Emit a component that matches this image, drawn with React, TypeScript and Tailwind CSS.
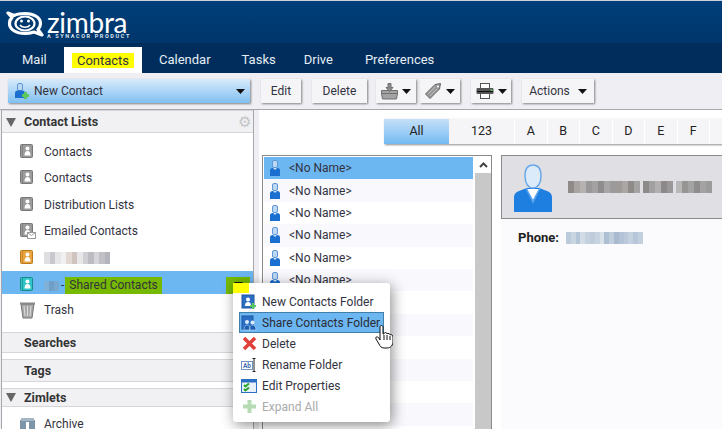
const folders = [
  { label: "Contacts", color: "gray" },
  { label: "Contacts", color: "gray" },
  { label: "Distribution Lists", color: "gray" },
  { label: "Emailed Contacts", color: "gray", mail: true },
];

const letters = ["A", "B", "C", "D", "E", "F"];

function Caret({ className = "" }: { className?: string }) {
  return (
    <svg width="9" height="5" viewBox="0 0 9 5" className={className}>
      <path d="M0 0h9L4.5 5z" fill="#111" />
    </svg>
  );
}

function Mosaic({ cells, size = 5, h = 12 }: { cells: string[]; size?: number; h?: number }) {
  return (
    <div className="flex shrink-0">
      {cells.map((c, i) => (
        <div key={i} style={{ background: c, width: size, height: h }} />
      ))}
    </div>
  );
}

function BookIcon({ fill, edge, mail }: { fill: string; edge: string; mail?: boolean }) {
  return (
    <svg width="17" height="18" viewBox="0 0 17 18" className="shrink-0">
      <rect x="1.500" y="1.500" width="12" height="13" rx="1" fill={fill} stroke={edge} />
      <rect x="3" y="2" width="1" height="12" fill={edge} opacity="0.6" />
      <circle cx="8.500" cy="5.500" r="2" fill="#fff" />
      <path d="M5.500 12.500c0-3 1-4.500 3-4.500s3 1.500 3 4.500z" fill="#fff" />
      {mail && (
        <g>
          <rect x="8.500" y="10.500" width="8" height="6" fill="#fff" stroke="#9a9a9a" />
          <path d="M8.500 10.500l4 3 4-3" fill="none" stroke="#9a9a9a" />
        </g>
      )}
    </svg>
  );
}

function PersonIcon() {
  return (
    <svg width="12" height="16" viewBox="0 0 12 16" className="shrink-0">
      <rect x="3.500" y="0.500" width="5" height="7" rx="1.500" fill="#bcd8f4" stroke="#5e97d6" />
      <path d="M1 16V10.500c0-1.500 1-2.500 2.500-2.500h5c1.500 0 2.500 1 2.500 2.500V16z" fill="#1a6fd0" />
      <path d="M4 8l2 2 2-2z" fill="#cfe3f7" />
    </svg>
  );
}

function LogoMark() {
  return (
    <svg width="38" height="26" viewBox="0 0 38 26" className="shrink-0">
      <path d="M2 2l6 2.500C11 3 15 2.500 19 2.500c9 0 15.500 4 15.500 10 0 2.500-1 4.500-2.500 6l4 5.500-8-3c-3 1-5.500 1.500-9 1.500-9 0-15.500-4-15.500-10 0-2.500 1-4.500 2.500-6z" fill="none" stroke="#fff" strokeWidth="3.200" strokeLinejoin="round" />
      <ellipse cx="19" cy="12.500" rx="9.500" ry="7" fill="#00386e" stroke="#fff" strokeWidth="2.200" />
      <circle cx="15.500" cy="10" r="1.500" fill="#fff" />
      <circle cx="22.500" cy="10" r="1.500" fill="#fff" />
      <path d="M14 14c2 3 8 3 10 0" fill="none" stroke="#fff" strokeWidth="1.600" />
    </svg>
  );
}

function ToolButton({ children, className = "" }: { children: React.ReactNode; className?: string }) {
  return (
    <div className={`flex h-6 items-center justify-center bg-[#f5f5f8] text-[12px] text-[#33333f] shadow-[1px_1px_2px_rgba(0,0,0,0.45)] ${className}`}>
      {children}
    </div>
  );
}

function SectionHeader({ label, open, gear, className = "" }: { label: string; open?: boolean; gear?: boolean; className?: string }) {
  return (
    <div className={`flex shrink-0 items-center border-y border-[#d6d6da] bg-[#f1f1f4] text-[12.500px] font-bold text-[#333] ${className}`}>
      <div className="flex w-[22px] pl-[4px]">
        {open && (
          <svg width="10" height="9" viewBox="0 0 10 9">
            <path d="M0 0h10L5 9z" fill="#666" />
          </svg>
        )}
      </div>
      <span>{label}</span>
      {gear && <span className="ml-auto mr-[2px] text-[15px] font-normal leading-none text-[#c4c4c4]">⚙</span>}
    </div>
  );
}

function MenuItem({ icon, label, active, disabled }: { icon: React.ReactNode; label: string; active?: boolean; disabled?: boolean }) {
  return (
    <div
      className={`flex h-[21px] items-center gap-[5px] whitespace-nowrap border pl-[1px] text-[12px] ${
        active ? "border-[#3f7fa8] bg-[#6cb6f2] text-[#2b2b33]" : "border-transparent text-[#33333f]"
      } ${disabled ? "text-[#aaaaaa]" : ""}`}
    >
      <div className="flex w-4 justify-center">{icon}</div>
      <span>{label}</span>
    </div>
  );
}

function FolderRow({ label, color, mail }: { label: string; color: string; mail?: boolean }) {
  return (
    <div className="flex h-[26.300px] items-center gap-[8px] pl-[17px] text-[12px] text-[#33333f]">
      <BookIcon fill={color === "gray" ? "#9b9b9b" : "#e8a33c"} edge={color === "gray" ? "#777" : "#b97a20"} mail={mail} />
      <span>{label}</span>
    </div>
  );
}

export default function App() {
  return (
    <div className="relative flex h-[429px] w-[722px] flex-col overflow-hidden bg-[#eeeef3] font-['Roboto',sans-serif]">
      {/* banner */}
      <div className="h-[43px] shrink-0 border-t border-[#c9d2dd] bg-gradient-to-b from-[#003f7a] to-[#00366b]">
        <div className="flex items-start pl-[6px] pt-[10px]">
          <LogoMark />
          <div className="ml-[3px] flex flex-col items-start">
            <span className="font-['Lato',sans-serif] text-[28px] leading-[22px] tracking-[-0.3px] text-white">zimbra</span>
            <span className="whitespace-nowrap text-[5.500px] font-bold leading-[6px] tracking-[1.600px] text-[#dbe4ee]">A SYNACOR PRODUCT</span>
          </div>
        </div>
      </div>

      {/* tabs */}
      <div className="flex h-[30px] shrink-0 items-end bg-[#002d5c] text-[13px] text-[#e6edf4]">
        <div className="flex h-[26px] w-[64px] items-center pl-[22px]">Mail</div>
        <div className="flex h-[26px] w-[78px] items-center justify-center bg-white text-[#33333f]">
          <span className="bg-[#ffff00] px-[5px] leading-[15px]">Contacts</span>
        </div>
        <div className="flex h-[26px] items-center pl-[17px]">
          <span>Calendar</span>
          <span className="ml-[31px]">Tasks</span>
          <span className="ml-[28px]">Drive</span>
          <span className="ml-[32px]">Preferences</span>
        </div>
      </div>

      {/* toolbar */}
      <div className="flex h-[37px] shrink-0 items-center border-b border-[#a8a8ac] pl-2">
        <div className="flex h-6 w-[242px] items-center bg-gradient-to-b from-[#d8eafa] to-[#7fc0f2] pl-[6px] pr-[5px] text-[12px] text-[#33333f] shadow-[1px_1px_2px_rgba(0,0,0,0.45)]">
          <svg width="15" height="17" viewBox="0 0 15 17" className="mr-[5px] shrink-0">
            <rect x="3.500" y="0.500" width="5" height="7" rx="1.500" fill="#bcd8f4" stroke="#5e97d6" />
            <path d="M1 15v-5c0-1.500 1-2.500 2.500-2.500h5c1.500 0 2.500 1 2.500 2.500v5z" fill="#1a6fd0" />
            <path d="M10 9v2H8v3h2v2h3v-2h2v-3h-2V9z" fill="#5cc95c" />
          </svg>
          <span>New Contact</span>
          <Caret className="ml-auto" />
        </div>
        <ToolButton className="ml-[11px] w-10">Edit</ToolButton>
        <ToolButton className="ml-[11px] w-[55px]">Delete</ToolButton>
        <ToolButton className="ml-[9px] w-10 gap-1">
          <svg width="17" height="17" viewBox="0 0 17 17">
            <path d="M0.500 7.500h16v3l-1 5.500h-14l-1-5.500z" fill="#a3a3a3" stroke="#6f6f6f" />
            <path d="M0.500 10.500h16" stroke="#6f6f6f" />
            <path d="M7 0.500h3v4h2l-3.500 4-3.500-4h2z" fill="#8c8c8c" stroke="#6f6f6f" />
          </svg>
          <Caret />
        </ToolButton>
        <ToolButton className="ml-1 w-10 gap-1">
          <svg width="17" height="17" viewBox="0 0 17 17">
            <path d="M0.500 11l9.500-9.500 5.500-1-1 5.500-9.500 9.500z" fill="#999" stroke="#666" />
            <path d="M3 11l7-7M5 13l7-7" stroke="#bbb" />
            <circle cx="13" cy="3.500" r="1.100" fill="#fff" />
          </svg>
          <Caret />
        </ToolButton>
        <ToolButton className="ml-[11px] w-10 gap-1">
          <svg width="18" height="16" viewBox="0 0 18 16">
            <rect x="4.500" y="0.500" width="9" height="5" fill="#fff" stroke="#555" />
            <rect x="0.500" y="5" width="17" height="6" rx="1" fill="#555" />
            <rect x="1" y="8" width="16" height="1" fill="#111" />
            <rect x="4.500" y="10.500" width="9" height="5" fill="#fff" stroke="#555" />
            <rect x="14.500" y="6.500" width="2" height="1.500" fill="#5cc95c" />
          </svg>
          <Caret />
        </ToolButton>
        <ToolButton className="ml-[11px] w-[72px] gap-2">
          <span>Actions</span>
          <Caret />
        </ToolButton>
      </div>

      <div className="flex min-h-0 flex-1">
        {/* sidebar */}
        <div className="ml-[1px] flex w-[253px] shrink-0 flex-col border-x border-[#a8a8ac] bg-white">
          <SectionHeader label="Contact Lists" open gear className="h-[23px] pt-[1px]" />
          <div className="pt-[6px]">
            {folders.map((f, i) => (
              <FolderRow key={i} label={f.label} color={f.color} mail={f.mail} />
            ))}
            <div className="flex h-[27.300px] items-center gap-[8px] pl-[17px]">
              <BookIcon fill="#e8a33c" edge="#b97a20" />
              <Mosaic size={5.500} h={12} cells={["#dfdfe2", "#c9c9cd", "#e6e6e8", "#f0f0f0", "#e2d8d4", "#cfc4c0", "#e8e8e8", "#d0d0d4", "#bcbcc2", "#d6d6da", "#c0c0c6", "#b4b4bc"]} />
            </div>
            <div className="flex h-[23px] items-end bg-[#6cb6f2] pl-[17px] pr-[3px] text-[12px] text-[#33333f]">
              <BookIcon fill="#2fc4c8" edge="#18898c" />
              <div className="mb-[3px] ml-[8px]">
                <Mosaic size={5} h={10} cells={["#7fb0d8", "#6f9fc8", "#7aa8cf"]} />
              </div>
              <span className="ml-[2px] leading-[17px]">-</span>
              <span className="ml-[1px] bg-[#76b900] px-1 leading-[17px]">Shared Contacts</span>
              <div className="ml-auto flex h-[17px] w-6 items-start justify-center bg-[#76b900] pt-[5px]">
                <Caret />
              </div>
            </div>
            <div className="flex h-[32px] items-center gap-[8px] pl-[17px] text-[12px] text-[#33333f]">
              <svg width="17" height="18" viewBox="0 0 17 18" className="shrink-0">
                <path d="M2 3h13l-2 14H4z" fill="#a8a8a8" stroke="#777" />
                <rect x="1" y="1.500" width="15" height="2" fill="#888" />
                <path d="M5 5l1 10M8.500 5v10M12 5l-1 10" stroke="#dcdcdc" />
              </svg>
              <span>Trash</span>
            </div>
          </div>
          <SectionHeader label="Searches" className="mt-[6px] h-[21px]" />
          <SectionHeader label="Tags" className="mt-[6px] h-[23px]" />
          <SectionHeader label="Zimlets" open className="mt-[6px] h-[19px]" />
          <div className="flex items-center gap-[8px] pl-[17px] pt-[8px] text-[12px] text-[#33333f]">
            <svg width="17" height="15" viewBox="0 0 17 15" className="shrink-0">
              <path d="M1 3h15v12H1z" fill="#7d95a8" />
              <path d="M2 1h13v3H2z" fill="#a4b6c4" />
              <rect x="7" y="5" width="3" height="8" fill="#fff" />
            </svg>
            <span>Archive</span>
          </div>
        </div>

        {/* contacts area */}
        <div className="ml-[5px] flex min-w-0 flex-1 flex-col bg-white">
          <div className="ml-[125px] mt-[9px] flex h-[25px] w-[400px] shrink-0 items-center bg-[#f5f5f8] text-center text-[12.500px] text-[#222] shadow-[1px_1px_2px_rgba(0,0,0,0.45)]">
            <div className="flex h-full w-[65px] items-center justify-center bg-gradient-to-b from-[#c5e0f7] to-[#74baf2]">All</div>
            <div className="flex h-full w-[66px] items-center justify-center border-r border-white">123</div>
            {letters.map((l) => (
              <div key={l} className="flex h-full w-[32.500px] items-center justify-center border-r border-white">
                {l}
              </div>
            ))}
          </div>

          <div className="mt-[11px] flex min-h-0 flex-1 pl-[3px]">
            {/* list */}
            <div className="flex w-[230px] shrink-0 border-x border-t border-[#8a8a8a] pl-[1px] pt-[1px]">
              <div className="w-[209px] shrink-0">
                {[0, 1, 2, 3, 4, 5, 6, 7, 8, 9, 10, 11].map((i) => (
                  <div
                    key={i}
                    className={`flex h-[22.400px] items-center gap-[8px] pl-[5px] text-[12px] text-[#33333f] ${
                      i === 0 ? "bg-[#6cb6f2]" : i % 2 === 1 ? "bg-[#f9f9fd]" : "bg-white"
                    }`}
                  >
                    {/* rows past the sixth sit entirely under the menu */}
                    {i < 6 && <PersonIcon />}
                    {i < 6 && <span>{"<No Name>"}</span>}
                  </div>
                ))}
              </div>
              <div className="ml-[2px] flex w-4 shrink-0 flex-col bg-[#c8c8c8]">
                <div className="flex h-4 shrink-0 items-center justify-center bg-white">
                  <svg width="9" height="6" viewBox="0 0 9 6">
                    <path d="M1 5l3.500-3.500L8 5" fill="none" stroke="#444" strokeWidth="2" />
                  </svg>
                </div>
              </div>
            </div>

            {/* detail */}
            <div className="ml-[9px] flex min-w-0 flex-1 flex-col bg-[#fbfbfe]">
              <div className="flex h-[64px] shrink-0 items-center border-y border-l border-[#8a8a8a] bg-[#e0e0e4] pl-[11px]">
                <svg width="40" height="50" viewBox="0 0 40 50" className="mt-[4px] shrink-0">
                  <path d="M1 48V33c0-3 2-5 5-6l8-3h12l8 3c3 1 5 3 5 6v15z" fill="#1f7fe0" />
                  <path d="M14 25l6 11 6-11z" fill="#fff" />
                  <path d="M13 24l7 14 7-14" fill="none" stroke="#5aa5ee" strokeWidth="1.500" />
                  <path d="M12 12c0-7 3-11 8-11s8 4 8 11-3 12-8 12-8-5-8-12z" fill="#dcebfa" stroke="#6aa8ea" strokeWidth="1.500" />
                </svg>
                <div className="ml-[15px] flex gap-[3px]">
                  <Mosaic size={6} h={12} cells={["#8f8a88", "#a8a4a2", "#b5b2b2", "#9a9798", "#a4a1a2", "#8f8c8d", "#a8a5a6", "#9c9a9b", "#9d9a98", "#a9a7a6", "#8f8b88", "#a4a2a2"]} />
                  <Mosaic size={6} h={12} cells={["#8d8a8a", "#a2a0a0", "#b2b0b0", "#8c8988", "#9a9898"]} />
                  <Mosaic size={6} h={12} cells={["#b8b8b8", "#979494", "#a3a3a3", "#8e8c8c", "#a3a3a3", "#9b9b9b"]} />
                </div>
              </div>
              <div className="flex items-center pl-[17px] pt-[9px] text-[13px]">
                <span className="font-bold text-[#222]">Phone:</span>
                <div className="ml-[7px]">
                  <Mosaic size={4.800} h={12} cells={["#bccbdc", "#c9d5e1", "#b5c5d8", "#d2dce6", "#c5d1de", "#bfccdb", "#c7d3e0", "#d8e0e8", "#aebfd4", "#c0cddc", "#a9b9d0", "#b3c2d6", "#bac8da", "#c4d1df", "#b8c6d9", "#c2cfdc"]} />
                </div>
              </div>
            </div>
          </div>
        </div>
      </div>

      {/* folder context menu */}
      <div className="absolute left-[233px] top-[283px] h-[139px] w-[157px] rounded-[3px] bg-white px-[6px] pt-[8px] shadow-[2px_3px_14px_rgba(0,0,0,0.45)]">
        <MenuItem
          label="New Contacts Folder"
          icon={
            <svg width="16" height="16" viewBox="0 0 16 16">
              <rect x="1" y="1" width="12" height="13" fill="#2a6fc4" stroke="#1f56a0" />
              <circle cx="7" cy="5.500" r="2" fill="#fff" />
              <path d="M4 12c0-3 1-4 3-4s3 1 3 4z" fill="#fff" />
              <path d="M11 9v2H9v2h2v2h2v-2h2v-2h-2V9z" fill="#5cc95c" />
            </svg>
          }
        />
        <MenuItem
          active
          label="Share Contacts Folder"
          icon={
            <svg width="16" height="16" viewBox="0 0 16 16">
              <rect x="1" y="1" width="11" height="13" fill="#2a6fc4" stroke="#1f56a0" />
              <circle cx="6" cy="7" r="2" fill="#dcebfa" />
              <circle cx="11.500" cy="7.500" r="2" fill="#dcebfa" />
              <path d="M3 15c0-3 1-5 3-5s3 2 3 5zM8.500 15c0-3 1-5 3-5s3.500 2 3.500 5z" fill="#1a5fb4" stroke="#dcebfa" strokeWidth="0.500" />
            </svg>
          }
        />
        <MenuItem
          label="Delete"
          icon={
            <svg width="15" height="15" viewBox="0 0 15 15">
              <path d="M2 2l11 11M13 2L2 13" stroke="#e0403a" strokeWidth="3.500" />
            </svg>
          }
        />
        <MenuItem
          label="Rename Folder"
          icon={
            <svg width="16" height="14" viewBox="0 0 16 14">
              <rect x="0.500" y="3.500" width="11" height="8" fill="#fff" stroke="#6f93c4" />
              <text x="2" y="9.800" fontSize="6.500" fontWeight="700" fill="#3f6fb0">Ab</text>
              <path d="M13 1v12M11.500 0.500h3M11.500 13.500h3" stroke="#222" />
            </svg>
          }
        />
        <MenuItem
          label="Edit Properties"
          icon={
            <svg width="16" height="16" viewBox="0 0 16 16">
              <rect x="0.500" y="1.500" width="15" height="13" fill="#e8f1fb" stroke="#2a6fc4" />
              <rect x="1" y="2" width="14" height="2.500" fill="#2a6fc4" />
              <path d="M3 7l1.500 1.500L8 5.500M3 11l1.500 1.500L8 9.500" fill="none" stroke="#2aa52a" strokeWidth="2" />
            </svg>
          }
        />
        <MenuItem
          disabled
          label="Expand All"
          icon={
            <svg width="13" height="13" viewBox="0 0 13 13">
              <path d="M4.500 0h4v4.500H13v4H8.500V13h-4V8.500H0v-4h4.500z" fill="#b5dcb5" />
            </svg>
          }
        />
      </div>

      {/* yellow highlight painted over the menu's corner */}
      <div className="absolute left-[233px] top-[283px] h-[10px] w-4 bg-[#ffff00]" />

      {/* hand cursor over the menu */}
      <svg width="18" height="24" viewBox="0 0 18 24" className="absolute left-[375px] top-[325px]">
        <path d="M5 2c0-2 3-2 3 0v7l1 0c0-2 3-2 3 0 0-1 3-1 3 1 1-1 3 0 3 2v4c0 4-2 7-6 7H9c-3 0-4-2-5-4l-3-5c-1-2 1-3 3-1l1 2z" fill="#fff" stroke="#111" strokeLinejoin="round" />
        <path d="M9 10v5M12 10v5M15 11v4" stroke="#111" />
      </svg>
    </div>
  );
}
